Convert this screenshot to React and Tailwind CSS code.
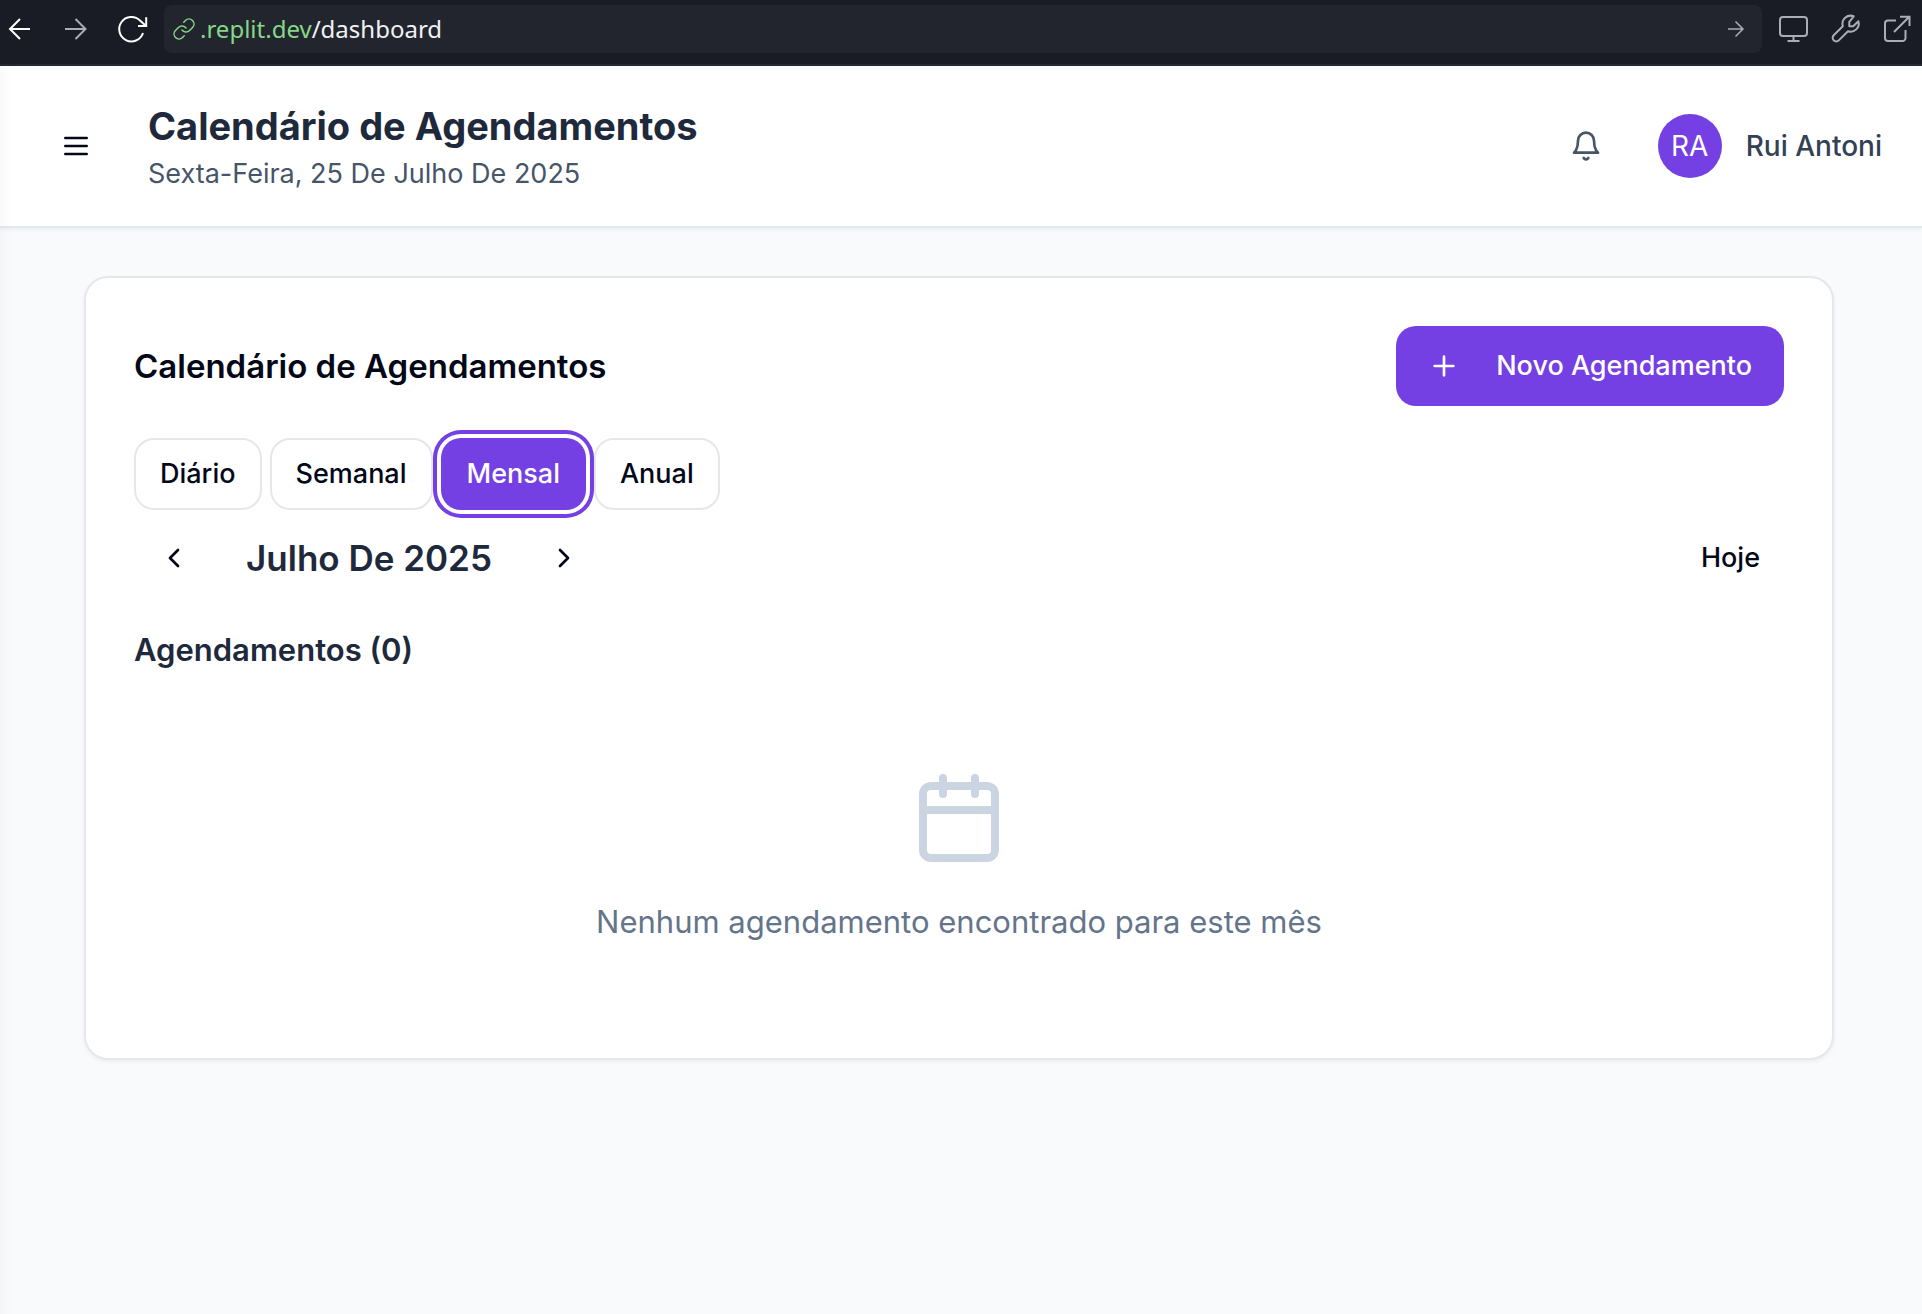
import React from "react";

function Icon({ className, strokeWidth = 2, children }) {
  return (
    <svg
      viewBox="0 0 24 24"
      fill="none"
      stroke="currentColor"
      strokeWidth={strokeWidth}
      strokeLinecap="round"
      strokeLinejoin="round"
      className={className}
      aria-hidden="true"
    >
      {children}
    </svg>
  );
}

function BrowserBar() {
  return (
    <div className="flex h-[66px] items-center border-b-2 border-[#252832] bg-[#191c24] pb-1.5 pl-1 pr-2 text-[#a9adb5]">
      <button aria-label="Voltar" className="flex size-8 items-center justify-center text-white">
        <svg viewBox="0 0 24 24" className="size-6" fill="none" stroke="currentColor" strokeWidth="2">
          <path d="M22 12H2.5M12 2 2 12l10 10" />
        </svg>
      </button>
      <button aria-label="Avançar" className="ml-6 flex size-8 items-center justify-center">
        <svg viewBox="0 0 24 24" className="size-6" fill="none" stroke="currentColor" strokeWidth="2">
          <path d="M1 12h20M11.5 2l10 10-10 10" />
        </svg>
      </button>
      <button aria-label="Recarregar" className="ml-6 flex size-8 items-center justify-center text-white">
        <svg viewBox="0 0 32 32" className="size-8" fill="none" stroke="currentColor" strokeWidth="2">
          <path d="M27 20A12.2 12.2 0 1 1 24 7.5L29.5 12.5M30.2 4.2v8.8H22" />
        </svg>
      </button>
      <div className="ml-4 flex h-12 min-w-0 flex-1 items-center rounded-lg bg-[#22252e] pl-2 pr-2.5">
        <Icon className="size-6 shrink-0 text-[#86d886]" strokeWidth={1.5}>
          <path d="M10 13a5 5 0 0 0 7.54.54l3-3a5 5 0 0 0-7.07-7.07l-1.72 1.71" />
          <path d="M14 11a5 5 0 0 0-7.54-.54l-3 3a5 5 0 0 0 7.07 7.07l1.71-1.71" />
        </Icon>
        <a href="#dashboard" className="ml-1 flex-1 font-['Noto_Sans',sans-serif] text-[24px] leading-8 text-[#f0f1f3]">
          <span className="text-[#86d886]">.replit.dev</span>/dashboard
        </a>
        <button aria-label="Ir" className="flex size-8 items-center justify-center">
          <svg viewBox="0 0 18 18" className="size-[18px]" fill="none" stroke="currentColor" strokeWidth="1.5">
            <path d="M1 9h15M8.5 1.5 16 9l-7.5 7.5" />
          </svg>
        </button>
      </div>
      <div className="ml-4 flex items-center gap-5">
        <button aria-label="Dispositivo">
          <svg viewBox="0 0 32 32" className="size-8" fill="none" stroke="currentColor" strokeWidth="2">
            <rect x="2" y="4" width="27" height="19" rx="3" />
            <path d="M15.5 23v5M9.500 28h12" />
          </svg>
        </button>
        <button aria-label="Ferramentas">
          <svg viewBox="0 0 32 32" className="size-8" fill="none" stroke="currentColor" strokeWidth="2" strokeLinejoin="round">
            <path d="M23.7 3.3a8.2 8.2 0 0 0-10.900 9.900L3.700 22.300a3.600 3.600 0 0 0 5.100 5.100l9.200-9.100A8.200 8.200 0 0 0 28.400 8.200l-5.200 5.100h-3.900v-4.500z" />
          </svg>
        </button>
        <button aria-label="Abrir em nova aba">
          <svg viewBox="0 0 32 32" className="size-8" fill="none" stroke="currentColor" strokeWidth="2">
            <path d="M14 7.500H6a3 3 0 0 0-3 3V25a3 3 0 0 0 3 3h14.500a3 3 0 0 0 3-3v-8M12 19 27.500 3.500M18 3.800h9.500V13" />
          </svg>
        </button>
      </div>
    </div>
  );
}

function Header() {
  return (
    <header className="flex items-center border-b-2 border-[#e2e8f0] bg-white py-8 pl-[60px] pr-10 shadow-[0_2px_4px_0_rgba(0,0,0,0.05)]">
      <button aria-label="Menu" className="text-[#020817]">
        <Icon className="size-8">
          <path d="M4 6h16M4 12h16M4 18h16" />
        </Icon>
      </button>
      <div className="ml-14 flex-1">
        <h1 className="text-[38px] font-bold leading-[56px] text-[#1e293b]">Calendário de Agendamentos</h1>
        <p className="text-[27px] leading-10 text-[#475569]">Sexta-Feira, 25 De Julho De 2025</p>
      </div>
      <button aria-label="Notificações" className="mr-14 text-[#475569]">
        <Icon className="size-8">
          <path d="M6 8a6 6 0 0 1 12 0c0 7 3 9 3 9H3s3-2 3-9" />
          <path d="M10.3 21a1.94 1.94 0 0 0 3.4 0" />
        </Icon>
      </button>
      <div className="flex items-center gap-6 text-[28px] font-medium leading-10">
        <div className="flex size-16 items-center justify-center rounded-full bg-[#743fe3] font-normal text-white">RA</div>
        <span className="text-[#334155]">Rui Antoni</span>
      </div>
    </header>
  );
}

const TABS = ["Diário", "Semanal", "Mensal", "Anual"];

function ViewTabs() {
  return (
    <div className="mt-8 flex gap-2">
      {TABS.map((tab) => (
        <button
          key={tab}
          aria-pressed={tab === "Mensal"}
          className={
            tab === "Mensal"
              ? "h-[72px] rounded-[20px] bg-[#743fe3] px-[26px] text-[27px] font-medium leading-10 text-white ring-4 ring-[#743fe3] ring-offset-4 ring-offset-white"
              : "h-[72px] rounded-[20px] border-2 border-[#e5e7eb] bg-white px-6 text-[27px] font-medium leading-10 text-[#020817]"
          }
        >
          {tab}
        </button>
      ))}
    </div>
  );
}

function CalendarCard() {
  return (
    <section className="rounded-3xl border-2 border-[#e5e7eb] bg-white p-12 shadow-[0_2px_4px_0_rgba(0,0,0,0.05)]">
      <div className="flex items-center justify-between">
        <h2 className="text-[33px] font-semibold leading-[48px] text-[#020817]">Calendário de Agendamentos</h2>
        <button className="flex h-20 items-center gap-9 rounded-[20px] bg-[#743fe3] px-8 text-[27px] font-medium leading-10 text-white">
          <Icon className="size-8">
            <path d="M5 12h14M12 5v14" />
          </Icon>
          Novo Agendamento
        </button>
      </div>
      <ViewTabs />
      <div className="mt-3 flex h-[72px] items-center justify-between text-[#020817]">
        <div className="flex items-center gap-8">
          <button aria-label="Mês anterior" className="px-6 py-5">
            <Icon className="size-8">
              <path d="m15 18-6-6 6-6" />
            </Icon>
          </button>
          <span className="text-[35px] font-semibold leading-[56px] text-[#1e293b]">Julho De 2025</span>
          <button aria-label="Próximo mês" className="px-6 py-5">
            <Icon className="size-8">
              <path d="m9 18 6-6-6-6" />
            </Icon>
          </button>
        </div>
        <button className="h-[72px] px-6 text-[27px] font-medium leading-10">Hoje</button>
      </div>
      <h3 className="mt-8 text-[31px] font-semibold leading-[48px] text-[#1e293b]">Agendamentos (0)</h3>
      <div className="mt-8 flex flex-col items-center py-16">
        <Icon className="size-24 text-[#cbd5e1]">
          <path d="M8 2v4M16 2v4M3 10h18" />
          <rect width="18" height="18" x="3" y="4" rx="2" />
        </Icon>
        <p className="mt-8 text-[31px] leading-[48px] text-[#64748b]">Nenhum agendamento encontrado para este mês</p>
      </div>
    </section>
  );
}

export default function App() {
  return (
    <div className="flex min-h-screen flex-col bg-[#f8fafc] font-['Inter',sans-serif]">
      <BrowserBar />
      <div className="relative flex flex-1 flex-col">
        <Header />
        <main className="flex-1 pb-12 pl-[84px] pr-[88px] pt-12">
          <CalendarCard />
        </main>
        <div className="pointer-events-none absolute inset-y-0 left-0 w-3 bg-linear-to-r from-black/2 to-transparent" />
      </div>
    </div>
  );
}
